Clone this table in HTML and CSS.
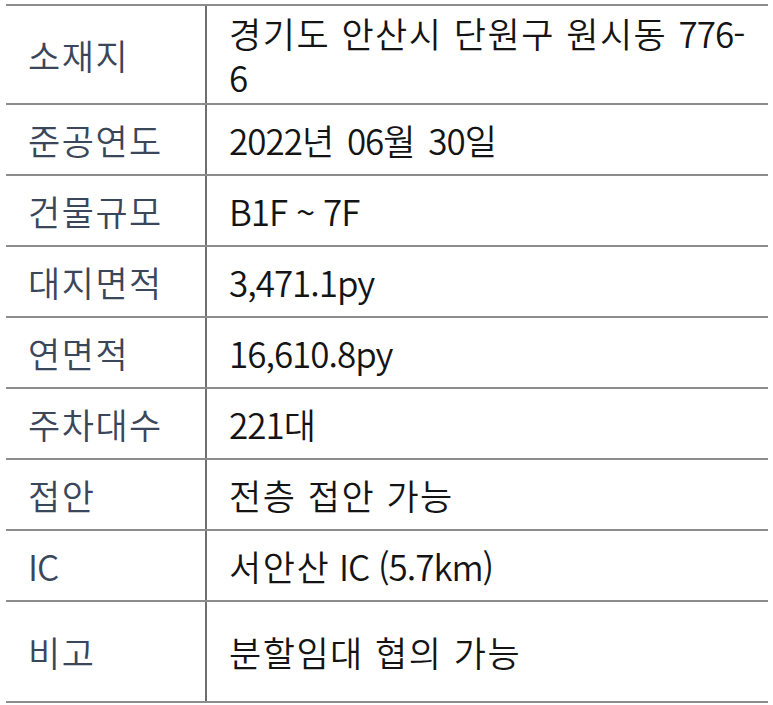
FILE: index.html
```html
<!DOCTYPE html>
<html lang="ko">
<head>
<meta charset="utf-8">
<link rel="stylesheet" href="styles.css">
</head>
<body>
<div class="spec">
  <div class="row row-tall">
    <div class="label">소재지</div>
    <div class="value">경기도 안산시 단원구 원시동 <span class="lat">776-</span><br><span class="lat">6</span></div>
  </div>
  <div class="row">
    <div class="label">준공연도</div>
    <div class="value"><span class="lat">2022</span>년 <span class="lat">06</span>월 <span class="lat">30</span>일</div>
  </div>
  <div class="row">
    <div class="label">건물규모</div>
    <div class="value"><span class="lat">B1F ~ 7F</span></div>
  </div>
  <div class="row">
    <div class="label">대지면적</div>
    <div class="value"><span class="lat">3,471.1py</span></div>
  </div>
  <div class="row">
    <div class="label">연면적</div>
    <div class="value"><span class="lat">16,610.8py</span></div>
  </div>
  <div class="row">
    <div class="label">주차대수</div>
    <div class="value"><span class="lat">221</span>대</div>
  </div>
  <div class="row">
    <div class="label">접안</div>
    <div class="value">전층 접안 가능</div>
  </div>
  <div class="row">
    <div class="label"><span class="lat">IC</span></div>
    <div class="value">서안산<span class="lat"> IC (5.7km)</span></div>
  </div>
  <div class="row row-last">
    <div class="label">비고</div>
    <div class="value">분할임대 협의 가능</div>
  </div>
</div>
</body>
</html>
```

FILE: styles.css
```css
html, body {
  margin: 0;
  padding: 0;
  background: #ffffff;
}

body {
  padding: 4px 0 0 6px;
  font-family: "Noto Sans CJK KR", "Noto Sans", sans-serif;
  font-weight: 350;
  font-size: 35px;
  letter-spacing: 1.5px;
}

.spec {
  width: 762px;
  border-bottom: 2px solid #8c8c8c;
}

.row {
  display: grid;
  grid-template-columns: 201px 1fr;
  height: 71px;
  border-top: 2px solid #8c8c8c;
  box-sizing: border-box;
}

.row-tall {
  height: 99px;
}

.row-last {
  height: 101px;
}

.label,
.value {
  display: flex;
  align-items: center;
  flex-wrap: wrap;
  align-content: center;
  padding-left: 22px;
  line-height: 44px;
}

.value {
  display: block;
  align-self: center;
  color: #141414;
}

.label {
  color: #3a4659;
  border-right: 2px solid #6f6f6f;
}

.lat {
  letter-spacing: -1px;
}
```
